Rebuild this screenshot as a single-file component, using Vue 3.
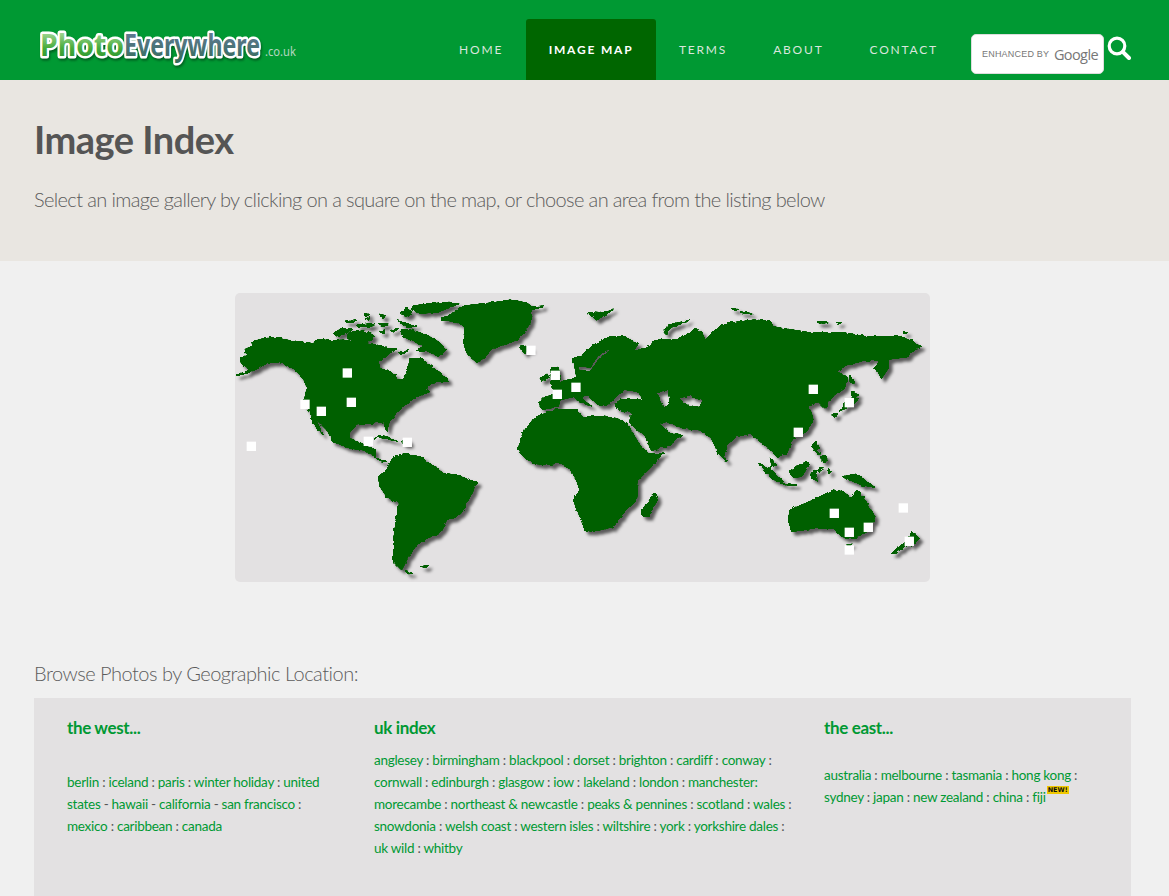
<script setup>
const navItems = ['HOME', 'IMAGE MAP', 'TERMS', 'ABOUT', 'CONTACT']

// centres of the map squares, read off in 3x crop coordinates
const westPins = [[64, 469], [225, 343], [274, 364], [352, 249], [364, 337], [415, 454], [532, 457], [903, 181], [976, 256], [982, 313], [1038, 292]]
const eastPins = [[700, 298], [808, 338], [655, 427], [763, 670], [808, 727], [865, 712], [808, 780], [988, 754], [970, 654]]

const westLand = [
  'M15,257 L60,240 L35,225 L32,205 L50,195 L45,178 L70,170 L62,158 L90,148 L130,142 L170,150 L245,160 L265,148 L300,152 L340,150 L390,160 L440,165 L500,178 L470,195 L445,215 L450,235 L490,250 L505,270 L520,270 L535,235 L540,205 L570,205 L600,225 L640,255 L655,275 L620,275 L585,295 L600,305 L560,320 L530,340 L500,370 L478,395 L470,425 L462,395 L425,400 L380,405 L360,425 L358,445 L385,455 L415,470 L437,480 L440,505 L470,515 L450,512 L425,495 L400,480 L360,475 L310,455 L290,420 L255,385 L280,435 L250,400 L240,365 L220,340 L232,295 L220,265 L190,235 L150,218 L110,218 L85,235 L50,250 Z',
  'M515,120 L540,118 L590,135 L625,155 L650,178 L625,200 L600,185 L560,185 L575,165 L540,150 L515,135 Z',
  'M310,130 L340,112 L365,118 L350,130 L320,138 Z',
  'M355,130 L400,122 L430,135 L425,155 L380,158 L352,145 Z',
  'M510,68 L530,55 L545,65 L535,80 Z',
  'M548,48 L590,42 L640,38 L685,42 L640,60 L600,68 L570,70 L545,60 Z',
  'M500,92 L530,100 L560,112 L530,112 Z',
  'M445,100 L475,102 L460,110 Z',
  'M448,72 L470,78 L460,85 Z',
  'M345,97 L380,88 L365,98 Z',
  'M380,105 L435,100 L425,110 L385,110 Z',
  'M478,122 L505,116 L490,126 Z',
  'M445,125 L465,118 L460,132 Z',
  'M505,188 L535,182 L515,194 Z',
  'M402,75 L418,72 L412,80 Z',
  'M405,86 L420,84 L414,92 Z',
  'M635,85 L670,70 L700,48 L750,42 L790,38 L840,30 L890,38 L905,50 L940,48 L905,60 L900,100 L880,130 L860,150 L820,165 L790,175 L760,205 L740,218 L715,195 L700,160 L705,110 L680,95 L635,90 Z',
  'M868,172 L890,168 L905,175 L885,192 Z',
  'M432,447 L452,436 L480,442 L500,455 L470,446 L445,442 Z',
  'M515,455 L535,448 L540,462 L520,462 Z',
  'M445,560 L470,540 L490,500 L520,492 L570,500 L600,520 L640,550 L680,555 L740,578 L715,630 L695,670 L650,690 L630,730 L590,745 L560,765 L535,800 L515,840 L490,815 L492,740 L505,640 L470,620 L450,590 Z',
  'M525,842 L548,850 L535,852 Z',
  'M572,830 L595,826 L590,832 Z',
  'M865,475 L880,425 L920,380 L980,358 L1040,358 L1060,380 L1110,380 L1160,385 L1188,398 L1228,462 L1255,492 L1300,490 L1265,530 L1225,570 L1220,630 L1180,670 L1150,710 L1090,725 L1065,720 L1050,680 L1030,630 L1050,600 L1025,540 L990,520 L920,525 L880,500 Z',
  'M930,265 L950,252 L958,262 L935,272 Z',
  'M962,235 L985,228 L992,280 L965,285 Z'
]

const eastLand = [
  'M-125,340 L-105,320 L-70,315 L-85,290 L-40,270 L-10,262 L-20,205 L0,200 L40,165 L90,140 L130,140 L175,160 L160,185 L205,170 L230,150 L290,150 L330,130 L345,115 L365,125 L375,150 L400,125 L420,110 L445,100 L520,90 L570,92 L580,110 L640,120 L690,128 L790,128 L860,140 L960,140 L1000,155 L1025,172 L990,185 L985,200 L925,208 L925,235 L905,265 L885,235 L900,210 L860,210 L800,225 L770,245 L800,260 L795,295 L755,320 L735,355 L715,335 L685,345 L700,390 L680,425 L640,445 L620,490 L590,500 L570,480 L535,450 L510,430 L470,440 L440,465 L430,505 L415,490 L395,445 L360,420 L310,415 L260,395 L235,400 L265,425 L305,435 L270,465 L215,482 L195,440 L148,398 L155,370 L110,355 L105,340 L125,328 L190,330 L175,305 L130,298 L85,345 L55,345 L20,315 L5,325 L35,350 L0,335 L-20,320 L-60,330 L-65,350 L-110,358 Z M-5,240 L30,245 L45,225 L60,205 L95,178 L78,180 L52,200 L32,232 L-5,228 Z M230,305 L265,300 L270,340 L255,355 L240,335 Z M295,325 L330,315 L370,335 L355,352 L320,345 Z',
  'M22,68 L60,70 L100,60 L75,78 L50,90 Z',
  'M250,125 L265,105 L330,90 L270,115 L260,135 Z',
  'M455,55 L475,58 L465,62 Z',
  'M480,65 L520,72 L495,70 Z',
  'M712,95 L745,96 L725,102 Z',
  'M770,98 L785,98 L775,102 Z',
  'M968,128 L982,128 L975,132 Z',
  'M808,255 L820,270 L822,282 L810,275 Z',
  'M815,305 L835,315 L825,325 L815,318 Z',
  'M835,325 L820,345 L775,365 L790,350 L800,330 Z',
  'M755,375 L770,370 L765,382 Z',
  'M622,450 L635,446 L628,456 Z',
  'M695,470 L708,450 L718,475 L705,480 Z',
  'M700,480 L725,490 L715,495 Z',
  'M720,505 L735,495 L742,512 L730,515 Z',
  'M185,660 L225,610 L232,630 L205,680 L190,680 Z',
  'M435,503 L443,512 L432,515 Z',
  'M535,520 L570,535 L610,575 L590,575 L555,545 Z',
  'M600,578 L650,585 L620,586 Z',
  'M570,500 L590,525 L575,530 Z',
  'M625,545 L680,512 L690,520 L665,560 L640,562 Z',
  'M690,550 L705,540 L712,572 L695,565 Z',
  'M705,540 L730,535 L715,545 Z',
  'M745,535 L752,548 L745,550 Z',
  'M785,560 L830,552 L885,592 L845,585 Z',
  'M630,660 L700,630 L760,600 L790,605 L815,625 L830,600 L850,620 L885,680 L870,720 L825,745 L785,740 L760,715 L700,715 L635,725 L625,690 Z',
  'M800,765 L818,762 L812,772 Z',
  'M935,790 L975,755 L985,762 L945,790 Z',
  'M995,725 L1018,745 L995,768 L985,755 Z'
]

// the no-break space keeps a colon on the line of the name before it
const withSeparators = (text) => text.replace(/ (:|-) /g, '\u00A0$1 ').split(/(\u00A0[:-] )/)

const westLinks = withSeparators('berlin : iceland : paris : winter holiday : united states - hawaii - california - san francisco : mexico : caribbean : canada')
const ukLinks = withSeparators('anglesey : birmingham : blackpool : dorset : brighton : cardiff : conway : cornwall : edinburgh : glasgow : iow : lakeland : london : manchester: morecambe : northeast & newcastle : peaks & pennines : scotland : wales : snowdonia : welsh coast : western isles : wiltshire : york : yorkshire dales : uk wild : whitby')
const eastLinks = withSeparators('australia : melbourne : tasmania : hong kong : sydney : japan : new zealand : china : fiji')
</script>

<template>
  <div class="page">
    <header class="topbar">
      <svg class="logo" width="262" height="46" viewBox="0 0 262 46">
        <defs>
          <linearGradient id="photoFill" x1="0" y1="0" x2="0" y2="1">
            <stop offset="0" stop-color="#d8f0c8" />
            <stop offset="0.6" stop-color="#45ab3a" />
            <stop offset="1" stop-color="#1e8a2c" />
          </linearGradient>
          <linearGradient id="everyFill" x1="0" y1="0" x2="0" y2="1">
            <stop offset="0" stop-color="#6f7fa6" />
            <stop offset="1" stop-color="#2f6a55" />
          </linearGradient>
        </defs>
        <text class="logo-word logo-halo" x="2" y="30" textLength="84" lengthAdjust="spacingAndGlyphs">Photo</text>
        <text class="logo-word logo-photo" x="2" y="30" textLength="84" lengthAdjust="spacingAndGlyphs">Photo</text>
        <text class="logo-word logo-halo" x="86" y="30" textLength="136" lengthAdjust="spacingAndGlyphs">Everywhere</text>
        <text class="logo-word logo-every" x="86" y="30" textLength="136" lengthAdjust="spacingAndGlyphs">Everywhere</text>
        <text class="logo-tld" x="227" y="30" textLength="31" lengthAdjust="spacingAndGlyphs">.co.uk</text>
      </svg>

      <nav class="nav">
        <a v-for="item in navItems" :key="item" :class="{ active: item === 'IMAGE MAP' }">{{ item }}</a>
      </nav>

      <div class="search-box">
        <span class="enhanced">ENHANCED BY</span>
        <span class="google">Google</span>
      </div>
      <svg class="search-icon" width="24" height="24" viewBox="0 0 24 24">
        <circle cx="10" cy="10" r="7.8" fill="none" stroke="#fff" stroke-width="3.2" />
        <path d="M15.8 15.8 L22 22" stroke="#fff" stroke-width="4" stroke-linecap="round" />
      </svg>
    </header>

    <section class="hero">
      <h1>Image Index</h1>
      <p>Select an image gallery by clicking on a square on the map, or choose an area from the listing below</p>
    </section>

    <main class="content">
      <div class="map-card">
        <svg width="695" height="289" viewBox="235 293 695 289">
          <defs>
            <!-- roughens the hand-traced coastlines and softens their corners -->
            <filter id="coast" filterUnits="userSpaceOnUse" x="235" y="293" width="695" height="289" color-interpolation-filters="sRGB">
              <feTurbulence type="fractalNoise" baseFrequency="0.2" numOctaves="2" seed="4" result="noise" />
              <feDisplacementMap in="SourceGraphic" in2="noise" scale="3.5" xChannelSelector="R" yChannelSelector="G" result="rough" />
              <feGaussianBlur in="rough" stdDeviation="0.6" result="soft" />
              <feComponentTransfer in="soft" result="shape">
                <feFuncA type="linear" slope="5" intercept="-1.2" />
              </feComponentTransfer>
              <feDropShadow in="shape" dx="3.5" dy="3.5" stdDeviation="1.8" flood-color="#000" flood-opacity="0.6" />
            </filter>
          </defs>
          <g class="land" filter="url(#coast)">
            <g transform="translate(230 290) scale(0.3333)">
              <path v-for="(d, i) in westLand" :key="i" :d="d" fill-rule="evenodd" />
            </g>
            <g transform="translate(580 290) scale(0.3333)">
              <path v-for="(d, i) in eastLand" :key="i" :d="d" fill-rule="evenodd" />
            </g>
          </g>
          <g transform="translate(230 290) scale(0.3333)" fill="#fff">
            <rect v-for="p in westPins" :key="p.join()" :x="p[0] - 14" :y="p[1] - 14" width="28" height="28" />
          </g>
          <g transform="translate(580 290) scale(0.3333)" fill="#fff">
            <rect v-for="p in eastPins" :key="p.join()" :x="p[0] - 14" :y="p[1] - 14" width="28" height="28" />
          </g>
        </svg>
      </div>

      <h2 class="browse">Browse Photos by Geographic Location:</h2>

      <div class="index">
        <div class="col col-west">
          <h3>the west...</h3>
          <p>
            <template v-for="(part, i) in westLinks" :key="i"><template v-if="i % 2">{{ part }}</template><a v-else>{{ part }}</a></template>
          </p>
        </div>
        <div class="col col-uk">
          <h3>uk index</h3>
          <p>
            <template v-for="(part, i) in ukLinks" :key="i"><template v-if="i % 2">{{ part }}</template><a v-else>{{ part }}</a></template>
          </p>
        </div>
        <div class="col col-east">
          <h3>the east...</h3>
          <p>
            <template v-for="(part, i) in eastLinks" :key="i"><template v-if="i % 2">{{ part }}</template><a v-else>{{ part }}</a></template>
            <sup class="new-tag">NEW!</sup>
          </p>
        </div>
      </div>
    </main>
  </div>
</template>

<style>
html,
body {
  margin: 0;
  background: #f0f0f0;
}
</style>

<style scoped>
.page {
  min-height: 896px;
  height: 896px;
  overflow: hidden;
  display: flex;
  flex-direction: column;
  font-family: Lato, "Open Sans", sans-serif;
  color: #555;
}

.topbar {
  height: 80px;
  flex: none;
  display: flex;
  align-items: flex-start;
  background: #009933;
  padding-right: 38px;
  box-sizing: border-box;
}

.logo {
  margin: 26px 0 0 38px;
  flex: none;
  overflow: visible;
}

.logo-word {
  font-family: "Noto Sans", sans-serif;
  font-weight: 700;
  font-size: 31px;
}

.logo-halo {
  fill: #fff;
  stroke: #fff;
  stroke-width: 5px;
  stroke-linejoin: round;
  filter: drop-shadow(1px 2px 1px rgba(0, 60, 20, 0.6));
}

.logo-photo {
  fill: url(#photoFill);
}

.logo-every {
  fill: url(#everyFill);
}

.logo-tld {
  font-family: "Noto Sans", sans-serif;
  font-size: 12px;
  fill: #b4d6c0;
}

.nav {
  margin: 19px 0 0 auto;
  display: flex;
}

.nav a {
  height: 61px;
  padding: 0 23px;
  display: flex;
  align-items: center;
  font-size: 12px;
  letter-spacing: 1.8px;
  color: #d9e6dd;
  white-space: nowrap;
}

.nav a.active {
  padding: 0 22.5px;
  background: #006600;
  border-radius: 3px 3px 0 0;
  color: #fff;
  font-weight: 700;
}

.search-box {
  margin: 34px 3px 0 10px;
  width: 133px;
  height: 40px;
  box-sizing: border-box;
  padding: 0 5px 0 10px;
  display: flex;
  align-items: center;
  justify-content: space-between;
  background: #fff;
  border: 1px solid #ddd;
  border-radius: 5px;
  color: #777;
  white-space: nowrap;
}

.enhanced {
  font-family: "Liberation Sans", sans-serif;
  font-size: 9px;
  letter-spacing: 0.2px;
}

.google {
  font-family: "Open Sans", sans-serif;
  font-size: 14.5px;
  font-weight: 500;
  letter-spacing: -0.6px;
}

.search-icon {
  margin-top: 36px;
  flex: none;
}

.hero {
  height: 181px;
  flex: none;
  box-sizing: border-box;
  padding: 35px 34px 0;
  background: #e9e6e1;
}

.hero h1 {
  margin: 0;
  font-size: 38px;
  line-height: 48px;
  font-weight: 700;
  letter-spacing: -0.5px;
  color: #555;
}

.hero p {
  margin: 24px 0 0;
  font-size: 20px;
  line-height: 24px;
  font-weight: 300;
  letter-spacing: -0.63px;
  color: #5c5c5c;
}

.content {
  flex: 1;
  display: flex;
  flex-direction: column;
  padding: 32px 38px 0 34px;
  min-height: 0;
}

.map-card {
  align-self: center;
  width: 695px;
  height: 289px;
  margin-left: -1px;
  background: #e3e1e2;
  border-radius: 5px;
  overflow: hidden;
}

.map-card svg {
  display: block;
}

.land {
  fill: #006000;
  stroke: #006000;
  stroke-width: 3px;
  stroke-linejoin: round;
}

.browse {
  margin: 79px 0 13px;
  font-size: 20px;
  line-height: 24px;
  font-weight: 300;
  letter-spacing: -0.5px;
  color: #5c5c5c;
}

.index {
  flex: 1;
  display: grid;
  grid-template-columns: 307px 450px 1fr;
  padding: 19px 0 0 33px;
  background: #e3e1e2;
}

.col h3 {
  margin: 0;
  font-size: 17px;
  line-height: 22px;
  font-weight: 700;
  letter-spacing: -0.35px;
  color: #009933;
}

.col p {
  margin: 0;
  font-size: 13.5px;
  line-height: 22px;
  letter-spacing: -0.27px;
  color: #555;
}

.col a {
  color: #009933;
}

.col-west {
  padding-right: 35px;
}

.col-west p {
  margin-top: 32px;
}

.col-uk {
  padding-right: 28px;
}

.col-uk p {
  margin-top: 10px;
}

.col-east {
  padding-right: 30px;
}

.col-east p {
  margin-top: 25px;
}

.new-tag {
  display: inline-block;
  margin-left: 1px;
  padding: 0 1px;
  background: #f0c800;
  color: #111;
  font-family: "DejaVu Sans", sans-serif;
  font-size: 6.5px;
  font-weight: 700;
  line-height: 8px;
  letter-spacing: 0;
  vertical-align: 10px;
}
</style>
